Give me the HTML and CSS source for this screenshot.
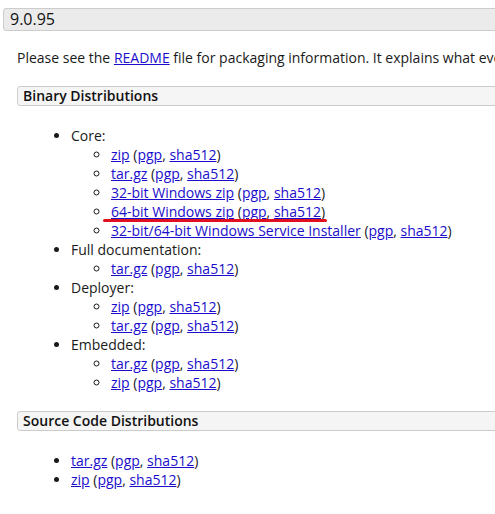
FILE: index.html
```html
<!DOCTYPE html>
<html>
<head>
<meta charset="utf-8">
<link rel="stylesheet" href="styles.css">
</head>
<body>
<h3 class="version">9.0.95</h3>
<div class="content">
  <p class="intro">Please see the <a href="#">README</a> file for packaging information. It explains what every distribution contains.</p>
  <h4 class="section">Binary Distributions</h4>
  <ul class="list">
    <li>Core:
      <ul class="sub">
        <li><a href="#">zip</a> (<a href="#">pgp</a>, <a href="#">sha512</a>)</li>
        <li><a href="#">tar.gz</a> (<a href="#">pgp</a>, <a href="#">sha512</a>)</li>
        <li><a href="#">32-bit Windows zip</a> (<a href="#">pgp</a>, <a href="#">sha512</a>)</li>
        <li class="marked"><a href="#">64-bit Windows zip</a> (<a href="#">pgp</a>, <a href="#">sha512</a>)</li>
        <li><a href="#">32-bit/64-bit Windows Service Installer</a> (<a href="#">pgp</a>, <a href="#">sha512</a>)</li>
      </ul>
    </li>
    <li>Full documentation:
      <ul class="sub">
        <li><a href="#">tar.gz</a> (<a href="#">pgp</a>, <a href="#">sha512</a>)</li>
      </ul>
    </li>
    <li>Deployer:
      <ul class="sub">
        <li><a href="#">zip</a> (<a href="#">pgp</a>, <a href="#">sha512</a>)</li>
        <li><a href="#">tar.gz</a> (<a href="#">pgp</a>, <a href="#">sha512</a>)</li>
      </ul>
    </li>
    <li>Embedded:
      <ul class="sub">
        <li><a href="#">tar.gz</a> (<a href="#">pgp</a>, <a href="#">sha512</a>)</li>
        <li><a href="#">zip</a> (<a href="#">pgp</a>, <a href="#">sha512</a>)</li>
      </ul>
    </li>
  </ul>
  <h4 class="section">Source Code Distributions</h4>
  <ul class="list">
    <li><a href="#">tar.gz</a> (<a href="#">pgp</a>, <a href="#">sha512</a>)</li>
    <li><a href="#">zip</a> (<a href="#">pgp</a>, <a href="#">sha512</a>)</li>
  </ul>
</div>
</body>
</html>
```

FILE: styles.css
```css
html, body {
  margin: 0;
  padding: 0;
  background: #ffffff;
  overflow: hidden;
}
body {
  font-family: "Open Sans", "Liberation Sans", sans-serif;
  font-size: 14px;
  line-height: 19px;
  color: #1a1a1a;
  width: 495px;
}
a {
  color: #1a0dcc;
  text-decoration: underline;
}
.version {
  margin: 8px 0 0 3px;
  width: 560px;
  height: 21px;
  box-sizing: content-box;
  padding: 0 6px;
  font-size: 16px;
  line-height: 21px;
  font-weight: 500;
  background: #ebebeb;
  border: 1px solid #cccccc;
  border-radius: 3px;
  color: #111;
}
.content {
  padding-left: 17px;
}
.intro {
  margin: 17px 0 0 0;
  white-space: nowrap;
  line-height: 19px;
}
.section {
  margin: 19px 0 0 0;
  width: 560px;
  height: 18px;
  padding: 0 5px;
  font-size: 14px;
  line-height: 18px;
  font-weight: 600;
  background: #f5f5f5;
  border: 1px solid #cccccc;
  border-radius: 3px;
  color: #111;
}
.list {
  margin: 20px 0 17px 0;
  padding-left: 54px;
  list-style: disc;
}
.sub {
  margin: 0;
  padding-left: 40px;
  list-style: circle;
}
.sub li {
  white-space: nowrap;
}
.marked {
  position: relative;
}
.marked::after {
  content: "";
  position: absolute;
  left: -8px;
  top: 17px;
  width: 224px;
  height: 3px;
  background: #e01020;
  border-radius: 2px;
}
```
